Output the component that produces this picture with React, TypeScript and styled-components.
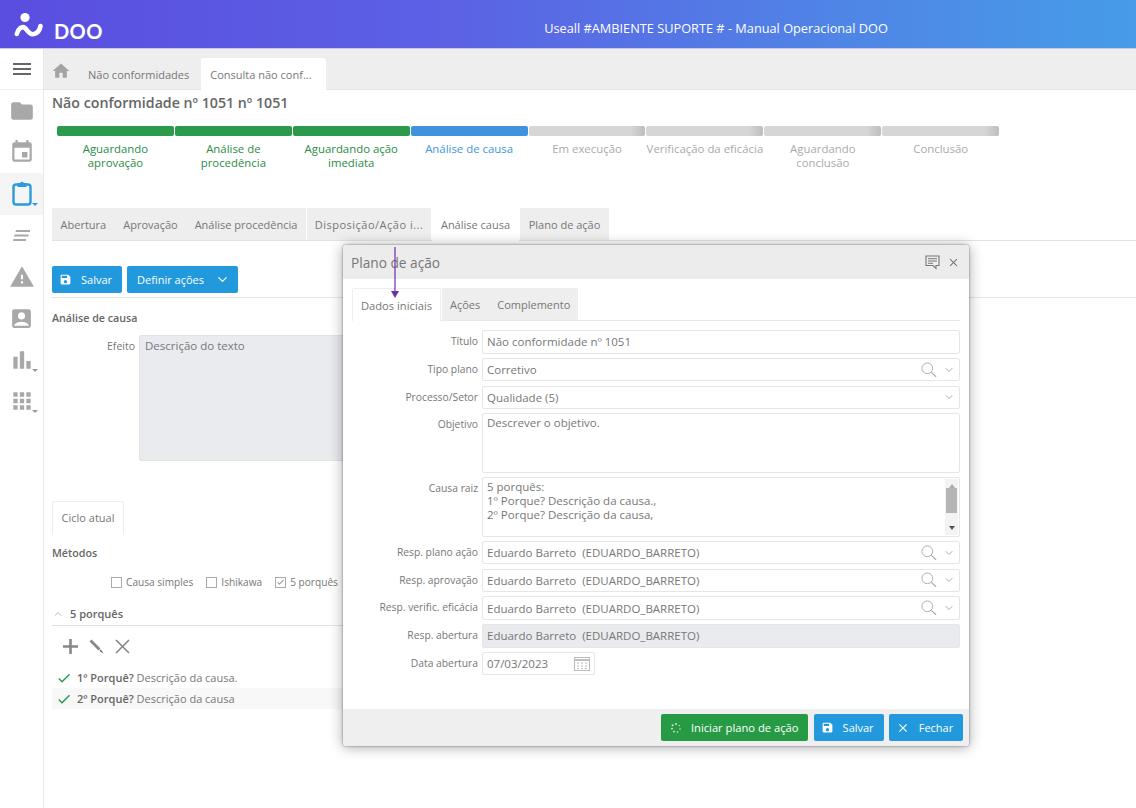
import React from 'react';
import styled, { createGlobalStyle } from 'styled-components';
import {
  MdApps,
  MdAccountBox,
  MdBarChart,
  MdClose,
  MdCheck,
  MdEvent,
  MdFolder,
  MdHome,
  MdSave,
  MdWarning,
} from 'react-icons/md';
import { FiChevronDown, FiChevronUp } from 'react-icons/fi';

const FONT = '"Open Sans", "Noto Sans", sans-serif';

const GlobalStyle = createGlobalStyle`
  html, body { margin: 0; padding: 0; background: #fff; }
  body { font-family: ${FONT}; color: #666; font-size: 12px; overflow: hidden; }
  * { box-sizing: border-box; }
`;

const Page = styled.div`
  position: relative;
  width: 1136px;
  height: 808px;
  overflow: hidden;
  background: #fff;
`;

const Header = styled.header`
  height: 49px;
  display: flex;
  align-items: center;
  background: linear-gradient(90deg, #5a4de0 0%, #5b62e4 40%, #4f86e6 75%, #469ce8 100%);
  border-bottom: 1px solid #c9c9e6;
`;

const LogoBox = styled.div`
  width: 300px;
  display: flex;
  align-items: center;
  gap: 11px;
  padding: 2px 0 0 14px;
`;

const LogoText = styled.span`
  font-family: "Lato", ${FONT};
  color: #fff;
  font-size: 20px;
  font-weight: 700;
  letter-spacing: 0.4px;
  margin-top: 12px;
`;

const HeaderTitle = styled.div`
  flex: none;
  width: 560px;
  margin-left: 136px;
  padding-top: 8px;
  text-align: center;
  color: #fff;
  font-size: 12.75px;
`;

const Body = styled.div`
  display: flex;
  height: 759px;
`;

const Sidebar = styled.nav`
  width: 44px;
  flex: none;
  border-right: 1px solid #e8e8e8;
  display: flex;
  flex-direction: column;
  align-items: stretch;
`;

const SideTop = styled.div`
  height: 41px;
  display: flex;
  align-items: center;
  justify-content: center;
  border-bottom: 1px solid #eee;
`;

const Burger = styled.span`
  width: 18px;
  height: 12px;
  border-top: 2px solid #666;
  border-bottom: 2px solid #666;
  position: relative;
  &::after {
    content: '';
    position: absolute;
    left: 0;
    right: 0;
    top: 3px;
    height: 2px;
    background: #666;
  }
`;

const SideItem = styled.div<{ $active?: boolean; $caret?: boolean }>`
  height: 41.5px;
  display: flex;
  align-items: center;
  justify-content: center;
  position: relative;
  color: ${(p) => (p.$active ? '#2a9bdf' : '#a8a8a8')};
  background: ${(p) => (p.$active ? '#f5f5f5' : 'transparent')};
  ${(p) =>
    p.$caret
      ? `&::after {
    content: '';
    position: absolute;
    right: 5px;
    bottom: 9px;
    border: 3px solid transparent;
    border-top: 3px solid ${p.$active ? '#2a9bdf' : '#999'};
    border-bottom: 0;
  }`
      : ''}
`;

const Main = styled.main`
  flex: 1;
  min-width: 0;
  display: flex;
  flex-direction: column;
`;

const TopTabs = styled.div`
  height: 41px;
  flex: none;
  display: flex;
  align-items: flex-end;
  background: #eee;
  border-bottom: 1px solid #e4e4e4;
  padding-left: 7px;
`;

const HomeTab = styled.div`
  height: 32px;
  width: 37px;
  color: #a3a3a3;
  display: flex;
  align-items: flex-start;
  padding-top: 4px;
`;

const TopTab = styled.div<{ $active?: boolean }>`
  height: 32px;
  padding: ${(p) => (p.$active ? '0 9px' : '0 12px 0 0')};
  width: ${(p) => (p.$active ? '125px' : 'auto')};
  display: flex;
  align-items: center;
  font-size: 11px;
  white-space: nowrap;
  background: ${(p) => (p.$active ? '#fff' : 'transparent')};
  border-radius: 2px 2px 0 0;
  color: #777;
  margin-bottom: -1px;
`;

const Title = styled.h1`
  margin: 0 0 0 8px;
  height: 24px;
  line-height: 26px;
  font-size: 14.2px;
  font-weight: 600;
  color: #666;
`;

const Stepper = styled.div`
  display: flex;
  gap: 1px;
  margin: 12px 0 0 13px;
  height: 82px;
`;

const Step = styled.div`
  width: 116.9px;
  display: flex;
  flex-direction: column;
  align-items: center;
`;

const StepBar = styled.div<{ $bg: string }>`
  width: 100%;
  height: 10px;
  border-radius: 2px;
  background: ${(p) => p.$bg};
`;

const StepLabel = styled.div<{ $color: string }>`
  margin-top: 6px;
  width: 117px;
  text-align: center;
  font-size: 11.4px;
  line-height: 14px;
  color: ${(p) => p.$color};
`;

const SectionTabs = styled.div`
  margin: 0 0 0 8px;
  height: 33px;
  display: flex;
  border-bottom: 1px solid #e2e2e2;
  font-size: 11px;
  color: #777;
`;

const SectionGroup = styled.div<{ $width: number; $wide?: boolean }>`
  display: flex;
  align-items: center;
  justify-content: center;
  background: #eee;
  width: ${(p) => p.$width}px;
  height: 32px;
  gap: 17px;
  white-space: nowrap;
  letter-spacing: ${(p) => (p.$wide ? '0.5px' : '0')};
  margin-right: 1px;
`;

const SectionActive = styled.div`
  display: flex;
  align-items: center;
  justify-content: center;
  width: 87px;
  height: 33px;
  background: #fff;
  margin-right: 1px;
`;

const Content = styled.div`
  padding: 25px 0 0 8px;
`;

const Toolbar = styled.div`
  display: flex;
  gap: 5px;
  padding-bottom: 4px;
  border-bottom: 1px solid #e5e5e5;
  height: 32px;
`;

const Button = styled.button<{ $color?: string; $width: number }>`
  width: ${(p) => p.$width}px;
  height: 27px;
  border: 0;
  border-radius: 2px;
  padding: 0 3px 0 0;
  background: ${(p) => p.$color ?? '#2299dd'};
  color: #fff;
  font-family: ${FONT};
  font-size: 11px;
  display: flex;
  align-items: center;
  justify-content: center;
  gap: 9px;
  white-space: nowrap;
`;

const DropButton = styled(Button)`
  padding: 0 0 0 2px;
  gap: 11px;
`;

const StartButton = styled(Button)`
  padding: 0;
  font-size: 11.2px;
  gap: 10px;
`;

const SectionHeading = styled.div<{ $top: number }>`
  font-size: 10.7px;
  font-weight: 600;
  color: #666;
  margin-top: ${(p) => p.$top}px;
  line-height: 15px;
`;

const EffectRow = styled.div`
  display: flex;
  margin-top: 9px;
  gap: 4px;
`;

const EffectLabel = styled.div`
  width: 83px;
  text-align: right;
  font-size: 10.5px;
  padding-top: 4px;
  color: #777;
`;

const EffectArea = styled.div`
  width: 300px;
  height: 126px;
  border-radius: 2px;
  background: #e9ebef;
  border: 1px solid #e2e2e2;
  padding: 2px 5px;
  font-size: 11.5px;
  color: #777;
`;

const CycleTab = styled.div`
  margin-top: 40px;
  width: 72px;
  height: 34px;
  padding-bottom: 2px;
  border: 1px solid #eee;
  border-bottom: 0;
  border-radius: 2px 2px 0 0;
  display: flex;
  align-items: center;
  justify-content: center;
  font-size: 11px;
  color: #777;
`;

const Checks = styled.div`
  display: flex;
  margin: 14px 0 0 59px;
  gap: 13px;
  font-size: 10.15px;
  color: #777;
`;

const CheckItem = styled.label`
  display: flex;
  align-items: center;
  gap: 4px;
  white-space: nowrap;
`;

const Box = styled.span`
  width: 11px;
  height: 11px;
  border: 1px solid #aaa;
  display: inline-flex;
  align-items: center;
  justify-content: center;
  color: #888;
  background: #fff;
`;

const WhysHeader = styled.div`
  margin-top: 13px;
  width: 300px;
  height: 24px;
  display: flex;
  align-items: center;
  gap: 6px;
  border-bottom: 1px solid #e2e2e2;
  font-size: 11px;
  font-weight: 600;
  color: #666;
`;

const IconBar = styled.div`
  display: flex;
  align-items: center;
  gap: 11px;
  height: 41px;
  padding-left: 11px;
  color: #888;
`;

const WhyRow = styled.div<{ $alt?: boolean }>`
  display: flex;
  align-items: center;
  height: 21px;
  width: 300px;
  gap: 5px;
  padding-left: 4px;
  font-size: 11px;
  color: #777;
  background: ${(p) => (p.$alt ? '#f8f8f8' : 'transparent')};
  white-space: nowrap;
  b {
    font-weight: 600;
    color: #666;
  }
  svg {
    color: #1f9a54;
  }
`;

const Modal = styled.section`
  position: absolute;
  left: 343px;
  top: 245px;
  width: 626px;
  height: 501px;
  background: #fff;
  border-radius: 3px;
  box-shadow: 0 0 2px rgba(0, 0, 0, 0.55), 0 1px 14px rgba(0, 0, 0, 0.35);
  display: flex;
  flex-direction: column;
`;

const ModalHead = styled.div`
  height: 34px;
  flex: none;
  background: #ececec;
  display: flex;
  align-items: center;
  padding: 0 9px 0 8px;
  font-size: 13.7px;
  color: #777;
  border-radius: 3px 3px 0 0;
`;

const ModalTitle = styled.div`
  flex: 1;
`;

const ModalIcons = styled.div`
  display: flex;
  align-items: center;
  gap: 7px;
  color: #777;
`;

const ModalTabs = styled.div`
  display: flex;
  height: 33px;
  margin: 9px 9px 0;
  border-bottom: 1px solid #e8e8e8;
  font-size: 11px;
  color: #777;
`;

const ModalTabActive = styled.div`
  width: 89px;
  height: 33px;
  border: 1px solid #eee;
  border-bottom: 0;
  background: #fff;
  display: flex;
  align-items: center;
  justify-content: center;
  border-radius: 2px 2px 0 0;
  font-size: 11.2px;
`;

const ModalTabGroup = styled.div`
  display: flex;
  align-items: center;
  gap: 17px;
  height: 32px;
  margin-left: 1px;
  padding: 0 8px;
  background: #eee;
`;

const Form = styled.div`
  flex: 1;
  padding: 9px 9px 0 0;
  display: flex;
  flex-direction: column;
  gap: 4.25px;
`;

const Row = styled.div`
  display: flex;
  gap: 4px;
`;

const Label = styled.div`
  width: 135px;
  flex: none;
  text-align: right;
  font-size: 10.3px;
  color: #777;
  padding-top: 4px;
  white-space: nowrap;
`;

const Field = styled.div<{ $disabled?: boolean; $h?: number; $w?: number }>`
  flex: ${(p) => (p.$w ? 'none' : '1')};
  width: ${(p) => (p.$w ? `${p.$w}px` : 'auto')};
  height: ${(p) => p.$h ?? 23.5}px;
  border: 1px solid #e6e6e6;
  border-radius: 2px;
  background: ${(p) => (p.$disabled ? '#e9ebef' : '#fff')};
  padding: ${(p) => (p.$h ? '1px 4px' : '0 4px')};
  display: flex;
  align-items: ${(p) => (p.$h ? 'flex-start' : 'center')};
  font-size: 11.5px;
  line-height: 14px;
  color: #777;
  position: relative;
`;

const FieldText = styled.div`
  flex: 1;
  white-space: pre-wrap;
  padding-top: 1px;
`;

const FieldIcons = styled.div`
  display: flex;
  align-items: center;
  gap: 6px;
  color: #aaa;
`;

const ScrollBar = styled.div`
  position: absolute;
  right: 1px;
  top: 1px;
  bottom: 1px;
  width: 13px;
  background: #f3f3f3;
  display: flex;
  flex-direction: column;
  align-items: center;
  justify-content: space-between;
  padding: 5px 0;
`;

const ScrollUp = styled.span`
  border: 3px solid transparent;
  border-bottom: 4px solid #aaa;
  border-top: 0;
`;

const ScrollDown = styled.span`
  border: 3px solid transparent;
  border-top: 4px solid #555;
  border-bottom: 0;
`;

const ScrollThumb = styled.div`
  width: 11px;
  height: 25px;
  background: #b5b5b5;
  margin: 0 0 12px;
`;

const ModalFoot = styled.div`
  height: 37px;
  flex: none;
  background: #efefef;
  display: flex;
  align-items: center;
  justify-content: flex-end;
  gap: 5.4px;
  padding: 0 6px 0 0;
  border-radius: 0 0 3px 3px;
`;

const Arrow = styled.svg`
  position: absolute;
  left: 390px;
  top: 247px;
  width: 10px;
  height: 52px;
`;

const steps = [
  { label: 'Aguardando aprovação', state: 'done' },
  { label: 'Análise de procedência', state: 'done' },
  { label: 'Aguardando ação imediata', state: 'done' },
  { label: 'Análise de causa', state: 'current' },
  { label: 'Em execução', state: 'todo' },
  { label: 'Verificação da eficácia', state: 'todo' },
  { label: 'Aguardando conclusão', state: 'todo' },
  { label: 'Conclusão', state: 'todo' },
];

const barBg: Record<string, string> = {
  done: '#2b9a4b',
  current: '#3f93dc',
  todo: 'linear-gradient(90deg, #d6d6d6 0%, #d6d6d6 88%, #bdbdbd 100%)',
};
const textColor: Record<string, string> = { done: '#2a8c45', current: '#3f97dc', todo: '#aaa' };

function Logo() {
  return (
    <svg width="29" height="26" viewBox="0 0 29 26" fill="none">
      <circle cx="11" cy="5.5" r="4.6" fill="#fff" />
      <path
        d="M2.8 22 C4 17 8 13.5 11 16 C14 19 16.5 23.5 20 22 C24 21 26 17 26.5 14"
        stroke="#fff"
        strokeWidth="4.6"
        strokeLinecap="round"
      />
    </svg>
  );
}

function Clipboard() {
  return (
    <svg width="22" height="27" viewBox="0 0 22 27" fill="none">
      <rect x="2.5" y="4.5" width="17" height="20" rx="2.5" stroke="currentColor" strokeWidth="2.4" />
      <path d="M6.5 3h2.7a2 2 0 0 1 3.6 0h2.7v4h-9z" fill="currentColor" />
    </svg>
  );
}

function SlantLines() {
  return (
    <svg width="17" height="11" viewBox="0 0 17 11" fill="#a8a8a8">
      <path d="M3 0h14v2H2.5zM1.5 4.5h14v2H1zM0.5 9h12.5v2H0z" />
    </svg>
  );
}

function Search() {
  return (
    <svg width="16" height="16" viewBox="0 0 17 17" fill="none" stroke="#aaa">
      <circle cx="6.7" cy="6.7" r="5.7" strokeWidth="1" />
      <path d="M11 11l5 4.6" strokeWidth="1.3" />
    </svg>
  );
}

function Lookup() {
  return (
    <FieldIcons>
      <Search />
      <FiChevronDown size={12} />
    </FieldIcons>
  );
}

function CalendarGlyph() {
  return (
    <svg width="16" height="15" viewBox="0 0 16 15" fill="none" stroke="#bbb">
      <rect x="0.5" y="1.5" width="15" height="13" />
      <path d="M1 4h14" stroke="#aaa" strokeWidth="1.5" />
      <path d="M3 7h2M7 7h2M11 7h2M3 10h2M7 10h2M11 10h2M3 12.5h2M7 12.5h2M11 12.5h2" />
    </svg>
  );
}

function CommentGlyph() {
  return (
    <svg width="15" height="15" viewBox="0 0 15 15" fill="none" stroke="#777">
      <path d="M1 1h13v9.5h-3v3l-3-3H1z" fill="#eee" strokeWidth="1.1" />
      <path d="M3 3.7h9M3 6h9M3 8.3h5" strokeWidth="1" />
    </svg>
  );
}

function PlusGlyph() {
  return (
    <svg width="15" height="15" viewBox="0 0 15 15" fill="#888">
      <path d="M6.2 0h2.6v6.2H15v2.6H8.8V15H6.2V8.8H0V6.2h6.2z" />
    </svg>
  );
}

function PencilGlyph() {
  return (
    <svg width="15" height="15" viewBox="0 0 15 15" fill="#888">
      <path d="M0.5 2.5L2.5 0.5L11.5 9.5L9.5 11.5z" />
      <path d="M10.5 12L12 10.5L14.5 14.5z" fill="#666" />
    </svg>
  );
}

function CrossGlyph() {
  return (
    <svg width="15" height="15" viewBox="0 0 15 15" fill="none" stroke="#888" strokeWidth="1.6">
      <path d="M1 1l13 13M14 1L1 14" />
    </svg>
  );
}

function Spinner() {
  return (
    <svg width="10" height="10" viewBox="0 0 10 10" fill="#d9f0df">
      <circle cx="5" cy="1" r="0.9" />
      <circle cx="8.4" cy="2.6" r="0.7" />
      <circle cx="9" cy="6" r="0.7" />
      <circle cx="6.5" cy="9" r="0.8" />
      <circle cx="3" cy="8.6" r="0.9" />
      <circle cx="1" cy="5.6" r="0.9" />
      <circle cx="1.6" cy="2.2" r="1" />
    </svg>
  );
}

export default function App() {
  return (
    <Page>
      <GlobalStyle />
      <Header>
        <LogoBox>
          <Logo />
          <LogoText>DOO</LogoText>
        </LogoBox>
        <HeaderTitle>Useall #AMBIENTE SUPORTE # - Manual Operacional DOO</HeaderTitle>
      </Header>
      <Body>
        <Sidebar>
          <SideTop>
            <Burger />
          </SideTop>
          <SideItem><MdFolder size={26} /></SideItem>
          <SideItem><MdEvent size={26} /></SideItem>
          <SideItem $active $caret><Clipboard /></SideItem>
          <SideItem><SlantLines /></SideItem>
          <SideItem><MdWarning size={26} /></SideItem>
          <SideItem><MdAccountBox size={25} /></SideItem>
          <SideItem $caret><MdBarChart size={26} /></SideItem>
          <SideItem $caret><MdApps size={26} /></SideItem>
        </Sidebar>
        <Main>
          <TopTabs>
            <HomeTab><MdHome size={20} /></HomeTab>
            <TopTab>Não conformidades</TopTab>
            <TopTab $active>Consulta não conf...</TopTab>
          </TopTabs>
          <Title>Não conformidade nº 1051 nº 1051</Title>
          <Stepper>
            {steps.map((s) => (
              <Step key={s.label}>
                <StepBar $bg={barBg[s.state]} />
                <StepLabel $color={textColor[s.state]}>{s.label}</StepLabel>
              </Step>
            ))}
          </Stepper>
          <SectionTabs>
            <SectionGroup $width={254}>
              <span>Abertura</span>
              <span>Aprovação</span>
              <span>Análise procedência</span>
            </SectionGroup>
            <SectionGroup $width={124} $wide>Disposição/Ação i...</SectionGroup>
            <SectionActive>Análise causa</SectionActive>
            <SectionGroup $width={89}>Plano de ação</SectionGroup>
          </SectionTabs>
          <Content>
            <Toolbar>
              <Button $width={70}><MdSave size={13} />Salvar</Button>
              <DropButton $width={111}>Definir ações<FiChevronDown size={15} /></DropButton>
            </Toolbar>
            <SectionHeading $top={13}>Análise de causa</SectionHeading>
            <EffectRow>
              <EffectLabel>Efeito</EffectLabel>
              <EffectArea>Descrição do texto</EffectArea>
            </EffectRow>
            <CycleTab>Ciclo atual</CycleTab>
            <SectionHeading $top={11}>Métodos</SectionHeading>
            <Checks>
              <CheckItem><Box />Causa simples</CheckItem>
              <CheckItem><Box />Ishikawa</CheckItem>
              <CheckItem><Box><MdCheck size={10} /></Box>5 porquês</CheckItem>
            </Checks>
            <WhysHeader><FiChevronUp size={12} color="#bbb" />5 porquês</WhysHeader>
            <IconBar>
              <PlusGlyph />
              <PencilGlyph />
              <CrossGlyph />
            </IconBar>
            <WhyRow><MdCheck size={16} /><span><b>1º Porquê?</b> Descrição da causa.</span></WhyRow>
            <WhyRow $alt><MdCheck size={16} /><span><b>2º Porquê?</b> Descrição da causa</span></WhyRow>
          </Content>
        </Main>
      </Body>
      <Modal>
        <ModalHead>
          <ModalTitle>Plano de ação</ModalTitle>
          <ModalIcons>
            <CommentGlyph />
            <MdClose size={13} />
          </ModalIcons>
        </ModalHead>
        <ModalTabs>
          <ModalTabActive>Dados iniciais</ModalTabActive>
          <ModalTabGroup>
            <span>Ações</span>
            <span>Complemento</span>
          </ModalTabGroup>
        </ModalTabs>
        <Form>
          <Row><Label>Título</Label><Field><FieldText>Não conformidade nº 1051</FieldText></Field></Row>
          <Row><Label>Tipo plano</Label><Field><FieldText>Corretivo</FieldText><Lookup /></Field></Row>
          <Row>
            <Label>Processo/Setor</Label>
            <Field><FieldText>Qualidade (5)</FieldText><FieldIcons><FiChevronDown size={12} /></FieldIcons></Field>
          </Row>
          <Row><Label>Objetivo</Label><Field $h={59.5}><FieldText>Descrever o objetivo.</FieldText></Field></Row>
          <Row>
            <Label>Causa raiz</Label>
            <Field $h={59.5}>
              <FieldText>{'5 porquês:\n1º Porque? Descrição da causa.,\n2º Porque? Descrição da causa,'}</FieldText>
              <ScrollBar>
                <ScrollUp />
                <ScrollThumb />
                <ScrollDown />
              </ScrollBar>
            </Field>
          </Row>
          <Row><Label>Resp. plano ação</Label><Field><FieldText>Eduardo Barreto  (EDUARDO_BARRETO)</FieldText><Lookup /></Field></Row>
          <Row><Label>Resp. aprovação</Label><Field><FieldText>Eduardo Barreto  (EDUARDO_BARRETO)</FieldText><Lookup /></Field></Row>
          <Row><Label>Resp. verific. eficácia</Label><Field><FieldText>Eduardo Barreto  (EDUARDO_BARRETO)</FieldText><Lookup /></Field></Row>
          <Row><Label>Resp. abertura</Label><Field $disabled><FieldText>Eduardo Barreto  (EDUARDO_BARRETO)</FieldText></Field></Row>
          <Row>
            <Label>Data abertura</Label>
            <Field $w={113}><FieldText>07/03/2023</FieldText><CalendarGlyph /></Field>
          </Row>
        </Form>
        <ModalFoot>
          <StartButton $width={147} $color="#279a45"><Spinner />Iniciar plano de ação</StartButton>
          <Button $width={70}><MdSave size={13} />Salvar</Button>
          <Button $width={74}><MdClose size={14} />Fechar</Button>
        </ModalFoot>
      </Modal>
      <Arrow viewBox="0 0 10 52">
        <path d="M4.4 0h1.2v46H4.4z" fill="#6a2eb0" />
        <path d="M1 44h8l-4 7z" fill="#6a2eb0" />
      </Arrow>
    </Page>
  );
}
